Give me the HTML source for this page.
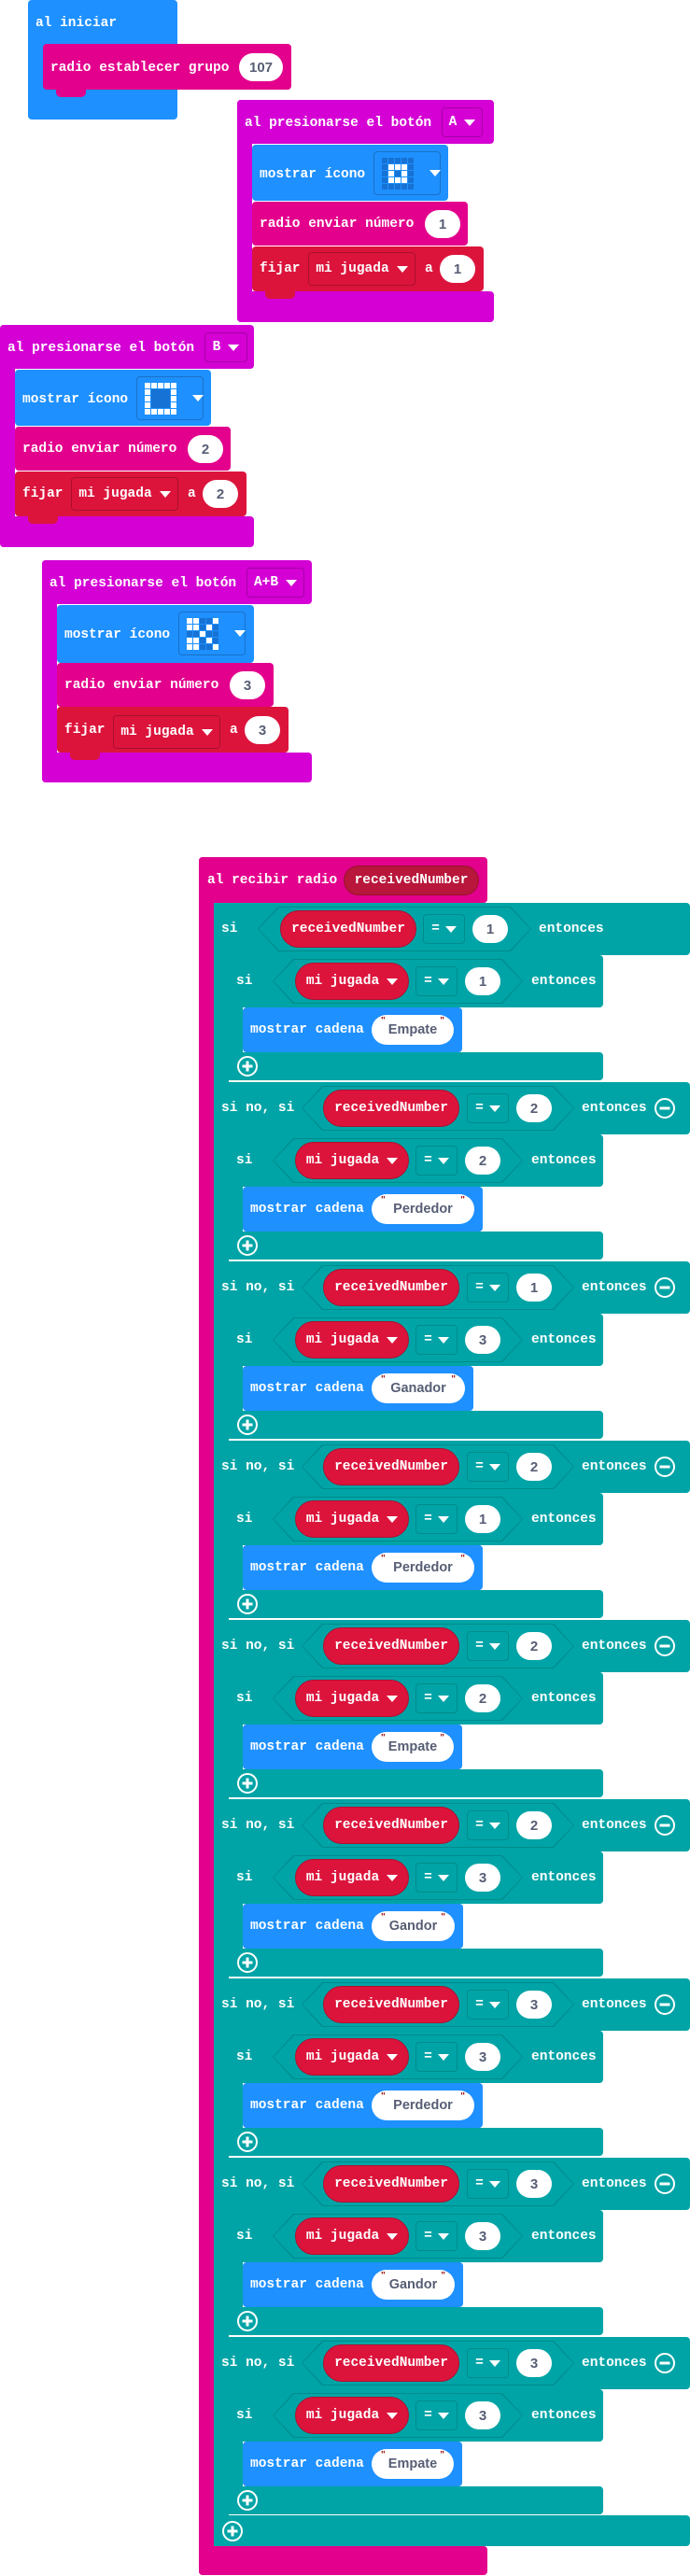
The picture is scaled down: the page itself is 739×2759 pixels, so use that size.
<!DOCTYPE html>
<html><head><meta charset="utf-8">
<style>
*{margin:0;padding:0;box-sizing:border-box}
body{width:739px;height:2759px;background:#fff;position:relative;overflow:hidden}
.a{position:absolute}
.r4{border-radius:4px}
.tx{position:absolute;font:bold 14.5px/20px "Liberation Mono",monospace;color:#fff;white-space:nowrap}
.ov{position:absolute;background:#fff;border-radius:16px;color:#575e75;font:bold 15px "Liberation Sans",sans-serif;display:flex;align-items:center;justify-content:center;height:30px;width:38px}
.dd{position:absolute;border:1px solid rgba(0,0,0,.22);border-radius:4px;display:flex;align-items:center;justify-content:center;font:bold 14.5px "Liberation Mono",monospace;color:#fff;white-space:nowrap}
.ar{display:inline-block;border-left:6px solid transparent;border-right:6px solid transparent;border-top:7px solid #fff;margin-left:8px;vertical-align:middle}
.seg{position:absolute;left:0;width:739px;height:192px}
.tl{position:absolute;background:#00a4a6}
.rowr{border-radius:0 4px 4px 0}
.hx{position:absolute;height:48px;background:#008b8d;clip-path:polygon(22px 0,calc(100% - 22px) 0,100% 50%,calc(100% - 22px) 100%,22px 100%,0 50%)}
.hx i{position:absolute;left:1px;top:1px;right:1px;bottom:1px;background:#00a4a6;clip-path:polygon(22px 0,calc(100% - 22px) 0,100% 50%,calc(100% - 22px) 100%,22px 100%,0 50%)}
.pl{position:absolute;height:40px;background:#dc143c;border:1px solid #b0102f;border-radius:20px;display:flex;align-items:center;justify-content:center;font:bold 14.5px "Liberation Mono",monospace;color:#fff;white-space:nowrap}
.eq{position:absolute;width:45px;height:32px;border:1px solid #008b8d;border-radius:4px;display:flex;align-items:center;justify-content:center;font:bold 14.5px "Liberation Mono",monospace;color:#fff}
.eq .ar{margin-left:6px}
.bl{position:absolute;background:#1e90ff;border-radius:4px}
.st{position:absolute;height:32px;background:#fff;border-radius:16px;color:#575e75;font:bold 14.5px "Liberation Sans",sans-serif;display:flex;align-items:center;justify-content:center}
.st::before{content:'"';position:absolute;left:10px;top:1px;font-size:10px;color:#a31515}
.st::after{content:'"';position:absolute;right:10px;top:1px;font-size:10px;color:#a31515}
.ic{position:absolute}
</style></head><body>

<!-- al iniciar -->
<div class="a r4" style="left:30px;top:0;width:160px;height:128px;background:#1e90ff"></div>
<div class="tx" style="left:38px;top:15px">al iniciar</div>
<div class="a r4" style="left:46px;top:47px;width:266px;height:49px;background:#e3008c"></div>
<div class="a" style="left:60px;top:94px;width:32px;height:10px;background:#e3008c;border-radius:0 0 5px 5px"></div>
<div class="tx" style="left:54px;top:63px">radio establecer grupo</div>
<div class="ov" style="left:256px;top:57px;width:47px">107</div>

<!-- Block A -->
<div class="a r4" style="left:254px;top:107px;width:275px;height:47px;background:#d400d4"></div>
<div class="a" style="left:254px;top:107px;width:16px;height:238px;background:#d400d4;border-radius:4px 0 0 4px"></div>
<div class="a r4" style="left:254px;top:312px;width:275px;height:33px;background:#d400d4"></div>
<div class="tx" style="left:262px;top:122px">al presionarse el botón</div>
<div class="dd" style="left:473px;top:115px;width:44px;height:32px">A<b class="ar"></b></div>
<div class="bl" style="left:270px;top:155px;width:210px;height:60px"></div>
<div class="tx" style="left:278px;top:177px">mostrar ícono</div>
<div class="dd" style="left:400px;top:162px;width:72px;height:47px;border-color:#1a72c8"></div>
<svg class="ic" style="left:409px;top:169px" width="34" height="34"><g fill="#1672d4"><rect x="0" y="0" width="6" height="6"/><rect x="7" y="0" width="6" height="6"/><rect x="14" y="0" width="6" height="6"/><rect x="21" y="0" width="6" height="6"/><rect x="28" y="0" width="6" height="6"/><rect x="0" y="7" width="6" height="6"/><rect x="28" y="7" width="6" height="6"/><rect x="0" y="14" width="6" height="6"/><rect x="14" y="14" width="6" height="6"/><rect x="28" y="14" width="6" height="6"/><rect x="0" y="21" width="6" height="6"/><rect x="28" y="21" width="6" height="6"/><rect x="0" y="28" width="6" height="6"/><rect x="7" y="28" width="6" height="6"/><rect x="14" y="28" width="6" height="6"/><rect x="21" y="28" width="6" height="6"/><rect x="28" y="28" width="6" height="6"/></g><g fill="#fff"><rect x="7" y="7" width="6" height="6"/><rect x="14" y="7" width="6" height="6"/><rect x="21" y="7" width="6" height="6"/><rect x="7" y="14" width="6" height="6"/><rect x="21" y="14" width="6" height="6"/><rect x="7" y="21" width="6" height="6"/><rect x="14" y="21" width="6" height="6"/><rect x="21" y="21" width="6" height="6"/></g></svg>
<b class="ar a" style="left:452px;top:182px"></b>
<div class="a r4" style="left:270px;top:216px;width:231px;height:47px;background:#e3008c"></div>
<div class="tx" style="left:278px;top:230px">radio enviar número</div>
<div class="ov" style="left:455px;top:225px">1</div>
<div class="a r4" style="left:270px;top:264px;width:248px;height:48px;background:#dc143c"></div>
<div class="a" style="left:284px;top:310px;width:32px;height:10px;background:#dc143c;border-radius:0 0 5px 5px"></div>
<div class="tx" style="left:278px;top:278px">fijar</div>
<div class="dd" style="left:330px;top:270px;width:115px;height:36px">mi jugada<b class="ar"></b></div>
<div class="tx" style="left:455px;top:278px">a</div>
<div class="ov" style="left:471px;top:273px">1</div>

<!-- Block B -->
<div class="a r4" style="left:0;top:348px;width:272px;height:47px;background:#d400d4"></div>
<div class="a" style="left:0;top:348px;width:16px;height:238px;background:#d400d4;border-radius:4px 0 0 4px"></div>
<div class="a r4" style="left:0;top:553px;width:272px;height:33px;background:#d400d4"></div>
<div class="tx" style="left:8px;top:363px">al presionarse el botón</div>
<div class="dd" style="left:219px;top:356px;width:46px;height:32px">B<b class="ar"></b></div>
<div class="bl" style="left:16px;top:396px;width:210px;height:60px"></div>
<div class="tx" style="left:24px;top:418px">mostrar ícono</div>
<div class="dd" style="left:146px;top:403px;width:72px;height:47px;border-color:#1a72c8"></div>
<svg class="ic" style="left:155px;top:410px" width="34" height="34"><g fill="#1672d4"><rect x="7" y="7" width="20" height="20"/></g><g fill="#fff"><rect x="0" y="0" width="6" height="6"/><rect x="7" y="0" width="6" height="6"/><rect x="14" y="0" width="6" height="6"/><rect x="21" y="0" width="6" height="6"/><rect x="28" y="0" width="6" height="6"/><rect x="0" y="7" width="6" height="6"/><rect x="28" y="7" width="6" height="6"/><rect x="0" y="14" width="6" height="6"/><rect x="28" y="14" width="6" height="6"/><rect x="0" y="21" width="6" height="6"/><rect x="28" y="21" width="6" height="6"/><rect x="0" y="28" width="6" height="6"/><rect x="7" y="28" width="6" height="6"/><rect x="14" y="28" width="6" height="6"/><rect x="21" y="28" width="6" height="6"/><rect x="28" y="28" width="6" height="6"/></g></svg>
<b class="ar a" style="left:198px;top:423px"></b>
<div class="a r4" style="left:16px;top:457px;width:231px;height:47px;background:#e3008c"></div>
<div class="tx" style="left:24px;top:471px">radio enviar número</div>
<div class="ov" style="left:201px;top:466px">2</div>
<div class="a r4" style="left:16px;top:505px;width:248px;height:48px;background:#dc143c"></div>
<div class="a" style="left:30px;top:551px;width:32px;height:10px;background:#dc143c;border-radius:0 0 5px 5px"></div>
<div class="tx" style="left:24px;top:519px">fijar</div>
<div class="dd" style="left:76px;top:511px;width:115px;height:36px">mi jugada<b class="ar"></b></div>
<div class="tx" style="left:201px;top:519px">a</div>
<div class="ov" style="left:217px;top:514px">2</div>

<!-- Block A+B -->
<div class="a r4" style="left:45px;top:600px;width:289px;height:47px;background:#d400d4"></div>
<div class="a" style="left:45px;top:600px;width:16px;height:238px;background:#d400d4;border-radius:4px 0 0 4px"></div>
<div class="a r4" style="left:45px;top:806px;width:289px;height:32px;background:#d400d4"></div>
<div class="tx" style="left:53px;top:615px">al presionarse el botón</div>
<div class="dd" style="left:264px;top:608px;width:62px;height:32px">A+B<b class="ar"></b></div>
<div class="bl" style="left:61px;top:648px;width:211px;height:62px"></div>
<div class="tx" style="left:69px;top:670px">mostrar ícono</div>
<div class="dd" style="left:191px;top:655px;width:72px;height:47px;border-color:#1a72c8"></div>
<svg class="ic" style="left:200px;top:662px" width="34" height="34"><g fill="#1672d4"><rect x="14" y="0" width="6" height="6"/><rect x="21" y="0" width="6" height="6"/><rect x="14" y="7" width="6" height="6"/><rect x="28" y="7" width="6" height="6"/><rect x="0" y="14" width="6" height="6"/><rect x="7" y="14" width="6" height="6"/><rect x="21" y="14" width="6" height="6"/><rect x="28" y="14" width="6" height="6"/><rect x="14" y="21" width="6" height="6"/><rect x="28" y="21" width="6" height="6"/><rect x="14" y="28" width="6" height="6"/><rect x="21" y="28" width="6" height="6"/></g><g fill="#fff"><rect x="0" y="0" width="6" height="6"/><rect x="7" y="0" width="6" height="6"/><rect x="28" y="0" width="6" height="6"/><rect x="0" y="7" width="6" height="6"/><rect x="7" y="7" width="6" height="6"/><rect x="21" y="7" width="6" height="6"/><rect x="14" y="14" width="6" height="6"/><rect x="0" y="21" width="6" height="6"/><rect x="7" y="21" width="6" height="6"/><rect x="21" y="21" width="6" height="6"/><rect x="0" y="28" width="6" height="6"/><rect x="7" y="28" width="6" height="6"/><rect x="28" y="28" width="6" height="6"/></g></svg>
<b class="ar a" style="left:243px;top:675px"></b>
<div class="a r4" style="left:61px;top:710px;width:232px;height:47px;background:#e3008c"></div>
<div class="tx" style="left:69px;top:724px">radio enviar número</div>
<div class="ov" style="left:246px;top:719px">3</div>
<div class="a r4" style="left:61px;top:757px;width:248px;height:49px;background:#dc143c"></div>
<div class="a" style="left:75px;top:804px;width:32px;height:10px;background:#dc143c;border-radius:0 0 5px 5px"></div>
<div class="tx" style="left:69px;top:772px">fijar</div>
<div class="dd" style="left:121px;top:766px;width:115px;height:36px">mi jugada<b class="ar"></b></div>
<div class="tx" style="left:246px;top:772px">a</div>
<div class="ov" style="left:262px;top:767px">3</div>

<!-- al recibir radio -->
<div class="a r4" style="left:213px;top:918px;width:309px;height:49px;background:#e3008c"></div>
<div class="a" style="left:213px;top:918px;width:20px;height:1840px;background:#e3008c;border-radius:4px 0 0 4px"></div>
<div class="a r4" style="left:213px;top:2727px;width:309px;height:31px;background:#e3008c"></div>
<div class="tx" style="left:222px;top:933px">al recibir radio</div>
<div class="pl" style="left:368px;top:927px;width:145px;height:32px;background:#b8163a;border-color:#9a1230">receivedNumber</div>
<div class="tl" style="left:229px;top:967px;width:16px;height:1760px;border-radius:4px 0 0 4px"></div>
<div class="tl rowr" style="left:229px;top:2694px;width:510px;height:33px"></div>
<svg class="a" style="left:237px;top:2699px" width="24" height="24"><circle cx="12" cy="12" r="10" fill="none" stroke="#fff" stroke-width="2"/><path d="M12 6.5v11M6.5 12h11" stroke="#fff" stroke-width="3"/></svg>

<!-- segment 0 -->
<div class="seg" style="top:967px">
<div class="tl rowr" style="left:229px;top:0;width:510px;height:56px"></div>
<div class="tx" style="left:237px;top:18px">si</div>
<div class="hx" style="left:276px;top:4px;width:293px"><i></i></div>
<div class="pl" style="left:300px;top:8px;width:146px">receivedNumber</div>
<div class="eq" style="left:453px;top:12px">=<b class="ar"></b></div>
<div class="ov" style="left:506px;top:13px">1</div>
<div class="tx" style="left:577px;top:18px">entonces</div>
<div class="tl r4" style="left:245px;top:56px;width:401px;height:56px"></div>
<div class="tl" style="left:245px;top:56px;width:15px;height:134px"></div>
<div class="tl r4" style="left:245px;top:160px;width:401px;height:30px"></div>
<div class="tx" style="left:253px;top:74px">si</div>
<div class="hx" style="left:292px;top:60px;width:268px"><i></i></div>
<div class="pl" style="left:316px;top:64px;width:122px">mi jugada<b class="ar"></b></div>
<div class="eq" style="left:445px;top:68px">=<b class="ar"></b></div>
<div class="ov" style="left:498px;top:69px">1</div>
<div class="tx" style="left:569px;top:74px">entonces</div>
<div class="bl" style="left:260px;top:112px;width:235px;height:48px"></div>
<div class="tx" style="left:268px;top:126px">mostrar cadena</div>
<div class="st" style="left:398px;top:120px;width:88px">Empate</div>
<svg class="a" style="left:253px;top:163px" width="24" height="24"><circle cx="12" cy="12" r="10" fill="none" stroke="#fff" stroke-width="2"/><path d="M12 6.5v11M6.5 12h11" stroke="#fff" stroke-width="3"/></svg>
</div>

<!-- segment 1 -->
<div class="seg" style="top:1159px">
<div class="tl rowr" style="left:229px;top:0;width:510px;height:56px"></div>
<div class="tx" style="left:237px;top:18px">si no, si</div>
<div class="hx" style="left:323px;top:4px;width:292px"><i></i></div>
<div class="pl" style="left:346px;top:8px;width:146px">receivedNumber</div>
<div class="eq" style="left:500px;top:12px">=<b class="ar"></b></div>
<div class="ov" style="left:553px;top:13px">2</div>
<div class="tx" style="left:623px;top:18px">entonces</div>
<svg class="a" style="left:700px;top:16px" width="24" height="24"><circle cx="12" cy="12" r="10" fill="none" stroke="#fff" stroke-width="2"/><path d="M6.5 12h11" stroke="#fff" stroke-width="3"/></svg>
<div class="tl r4" style="left:245px;top:56px;width:401px;height:56px"></div>
<div class="tl" style="left:245px;top:56px;width:15px;height:134px"></div>
<div class="tl r4" style="left:245px;top:160px;width:401px;height:30px"></div>
<div class="tx" style="left:253px;top:74px">si</div>
<div class="hx" style="left:292px;top:60px;width:268px"><i></i></div>
<div class="pl" style="left:316px;top:64px;width:122px">mi jugada<b class="ar"></b></div>
<div class="eq" style="left:445px;top:68px">=<b class="ar"></b></div>
<div class="ov" style="left:498px;top:69px">2</div>
<div class="tx" style="left:569px;top:74px">entonces</div>
<div class="bl" style="left:260px;top:112px;width:257px;height:48px"></div>
<div class="tx" style="left:268px;top:126px">mostrar cadena</div>
<div class="st" style="left:398px;top:120px;width:110px">Perdedor</div>
<svg class="a" style="left:253px;top:163px" width="24" height="24"><circle cx="12" cy="12" r="10" fill="none" stroke="#fff" stroke-width="2"/><path d="M12 6.5v11M6.5 12h11" stroke="#fff" stroke-width="3"/></svg>
</div>

<!-- segment 2 -->
<div class="seg" style="top:1351px">
<div class="tl rowr" style="left:229px;top:0;width:510px;height:56px"></div>
<div class="tx" style="left:237px;top:18px">si no, si</div>
<div class="hx" style="left:323px;top:4px;width:292px"><i></i></div>
<div class="pl" style="left:346px;top:8px;width:146px">receivedNumber</div>
<div class="eq" style="left:500px;top:12px">=<b class="ar"></b></div>
<div class="ov" style="left:553px;top:13px">1</div>
<div class="tx" style="left:623px;top:18px">entonces</div>
<svg class="a" style="left:700px;top:16px" width="24" height="24"><circle cx="12" cy="12" r="10" fill="none" stroke="#fff" stroke-width="2"/><path d="M6.5 12h11" stroke="#fff" stroke-width="3"/></svg>
<div class="tl r4" style="left:245px;top:56px;width:401px;height:56px"></div>
<div class="tl" style="left:245px;top:56px;width:15px;height:134px"></div>
<div class="tl r4" style="left:245px;top:160px;width:401px;height:30px"></div>
<div class="tx" style="left:253px;top:74px">si</div>
<div class="hx" style="left:292px;top:60px;width:268px"><i></i></div>
<div class="pl" style="left:316px;top:64px;width:122px">mi jugada<b class="ar"></b></div>
<div class="eq" style="left:445px;top:68px">=<b class="ar"></b></div>
<div class="ov" style="left:498px;top:69px">3</div>
<div class="tx" style="left:569px;top:74px">entonces</div>
<div class="bl" style="left:260px;top:112px;width:247px;height:48px"></div>
<div class="tx" style="left:268px;top:126px">mostrar cadena</div>
<div class="st" style="left:398px;top:120px;width:100px">Ganador</div>
<svg class="a" style="left:253px;top:163px" width="24" height="24"><circle cx="12" cy="12" r="10" fill="none" stroke="#fff" stroke-width="2"/><path d="M12 6.5v11M6.5 12h11" stroke="#fff" stroke-width="3"/></svg>
</div>

<!-- segment 3 -->
<div class="seg" style="top:1543px">
<div class="tl rowr" style="left:229px;top:0;width:510px;height:56px"></div>
<div class="tx" style="left:237px;top:18px">si no, si</div>
<div class="hx" style="left:323px;top:4px;width:292px"><i></i></div>
<div class="pl" style="left:346px;top:8px;width:146px">receivedNumber</div>
<div class="eq" style="left:500px;top:12px">=<b class="ar"></b></div>
<div class="ov" style="left:553px;top:13px">2</div>
<div class="tx" style="left:623px;top:18px">entonces</div>
<svg class="a" style="left:700px;top:16px" width="24" height="24"><circle cx="12" cy="12" r="10" fill="none" stroke="#fff" stroke-width="2"/><path d="M6.5 12h11" stroke="#fff" stroke-width="3"/></svg>
<div class="tl r4" style="left:245px;top:56px;width:401px;height:56px"></div>
<div class="tl" style="left:245px;top:56px;width:15px;height:134px"></div>
<div class="tl r4" style="left:245px;top:160px;width:401px;height:30px"></div>
<div class="tx" style="left:253px;top:74px">si</div>
<div class="hx" style="left:292px;top:60px;width:268px"><i></i></div>
<div class="pl" style="left:316px;top:64px;width:122px">mi jugada<b class="ar"></b></div>
<div class="eq" style="left:445px;top:68px">=<b class="ar"></b></div>
<div class="ov" style="left:498px;top:69px">1</div>
<div class="tx" style="left:569px;top:74px">entonces</div>
<div class="bl" style="left:260px;top:112px;width:257px;height:48px"></div>
<div class="tx" style="left:268px;top:126px">mostrar cadena</div>
<div class="st" style="left:398px;top:120px;width:110px">Perdedor</div>
<svg class="a" style="left:253px;top:163px" width="24" height="24"><circle cx="12" cy="12" r="10" fill="none" stroke="#fff" stroke-width="2"/><path d="M12 6.5v11M6.5 12h11" stroke="#fff" stroke-width="3"/></svg>
</div>

<!-- segment 4 -->
<div class="seg" style="top:1735px">
<div class="tl rowr" style="left:229px;top:0;width:510px;height:56px"></div>
<div class="tx" style="left:237px;top:18px">si no, si</div>
<div class="hx" style="left:323px;top:4px;width:292px"><i></i></div>
<div class="pl" style="left:346px;top:8px;width:146px">receivedNumber</div>
<div class="eq" style="left:500px;top:12px">=<b class="ar"></b></div>
<div class="ov" style="left:553px;top:13px">2</div>
<div class="tx" style="left:623px;top:18px">entonces</div>
<svg class="a" style="left:700px;top:16px" width="24" height="24"><circle cx="12" cy="12" r="10" fill="none" stroke="#fff" stroke-width="2"/><path d="M6.5 12h11" stroke="#fff" stroke-width="3"/></svg>
<div class="tl r4" style="left:245px;top:56px;width:401px;height:56px"></div>
<div class="tl" style="left:245px;top:56px;width:15px;height:134px"></div>
<div class="tl r4" style="left:245px;top:160px;width:401px;height:30px"></div>
<div class="tx" style="left:253px;top:74px">si</div>
<div class="hx" style="left:292px;top:60px;width:268px"><i></i></div>
<div class="pl" style="left:316px;top:64px;width:122px">mi jugada<b class="ar"></b></div>
<div class="eq" style="left:445px;top:68px">=<b class="ar"></b></div>
<div class="ov" style="left:498px;top:69px">2</div>
<div class="tx" style="left:569px;top:74px">entonces</div>
<div class="bl" style="left:260px;top:112px;width:235px;height:48px"></div>
<div class="tx" style="left:268px;top:126px">mostrar cadena</div>
<div class="st" style="left:398px;top:120px;width:88px">Empate</div>
<svg class="a" style="left:253px;top:163px" width="24" height="24"><circle cx="12" cy="12" r="10" fill="none" stroke="#fff" stroke-width="2"/><path d="M12 6.5v11M6.5 12h11" stroke="#fff" stroke-width="3"/></svg>
</div>

<!-- segment 5 -->
<div class="seg" style="top:1927px">
<div class="tl rowr" style="left:229px;top:0;width:510px;height:56px"></div>
<div class="tx" style="left:237px;top:18px">si no, si</div>
<div class="hx" style="left:323px;top:4px;width:292px"><i></i></div>
<div class="pl" style="left:346px;top:8px;width:146px">receivedNumber</div>
<div class="eq" style="left:500px;top:12px">=<b class="ar"></b></div>
<div class="ov" style="left:553px;top:13px">2</div>
<div class="tx" style="left:623px;top:18px">entonces</div>
<svg class="a" style="left:700px;top:16px" width="24" height="24"><circle cx="12" cy="12" r="10" fill="none" stroke="#fff" stroke-width="2"/><path d="M6.5 12h11" stroke="#fff" stroke-width="3"/></svg>
<div class="tl r4" style="left:245px;top:56px;width:401px;height:56px"></div>
<div class="tl" style="left:245px;top:56px;width:15px;height:134px"></div>
<div class="tl r4" style="left:245px;top:160px;width:401px;height:30px"></div>
<div class="tx" style="left:253px;top:74px">si</div>
<div class="hx" style="left:292px;top:60px;width:268px"><i></i></div>
<div class="pl" style="left:316px;top:64px;width:122px">mi jugada<b class="ar"></b></div>
<div class="eq" style="left:445px;top:68px">=<b class="ar"></b></div>
<div class="ov" style="left:498px;top:69px">3</div>
<div class="tx" style="left:569px;top:74px">entonces</div>
<div class="bl" style="left:260px;top:112px;width:236px;height:48px"></div>
<div class="tx" style="left:268px;top:126px">mostrar cadena</div>
<div class="st" style="left:398px;top:120px;width:89px">Gandor</div>
<svg class="a" style="left:253px;top:163px" width="24" height="24"><circle cx="12" cy="12" r="10" fill="none" stroke="#fff" stroke-width="2"/><path d="M12 6.5v11M6.5 12h11" stroke="#fff" stroke-width="3"/></svg>
</div>

<!-- segment 6 -->
<div class="seg" style="top:2119px">
<div class="tl rowr" style="left:229px;top:0;width:510px;height:56px"></div>
<div class="tx" style="left:237px;top:18px">si no, si</div>
<div class="hx" style="left:323px;top:4px;width:292px"><i></i></div>
<div class="pl" style="left:346px;top:8px;width:146px">receivedNumber</div>
<div class="eq" style="left:500px;top:12px">=<b class="ar"></b></div>
<div class="ov" style="left:553px;top:13px">3</div>
<div class="tx" style="left:623px;top:18px">entonces</div>
<svg class="a" style="left:700px;top:16px" width="24" height="24"><circle cx="12" cy="12" r="10" fill="none" stroke="#fff" stroke-width="2"/><path d="M6.5 12h11" stroke="#fff" stroke-width="3"/></svg>
<div class="tl r4" style="left:245px;top:56px;width:401px;height:56px"></div>
<div class="tl" style="left:245px;top:56px;width:15px;height:134px"></div>
<div class="tl r4" style="left:245px;top:160px;width:401px;height:30px"></div>
<div class="tx" style="left:253px;top:74px">si</div>
<div class="hx" style="left:292px;top:60px;width:268px"><i></i></div>
<div class="pl" style="left:316px;top:64px;width:122px">mi jugada<b class="ar"></b></div>
<div class="eq" style="left:445px;top:68px">=<b class="ar"></b></div>
<div class="ov" style="left:498px;top:69px">3</div>
<div class="tx" style="left:569px;top:74px">entonces</div>
<div class="bl" style="left:260px;top:112px;width:257px;height:48px"></div>
<div class="tx" style="left:268px;top:126px">mostrar cadena</div>
<div class="st" style="left:398px;top:120px;width:110px">Perdedor</div>
<svg class="a" style="left:253px;top:163px" width="24" height="24"><circle cx="12" cy="12" r="10" fill="none" stroke="#fff" stroke-width="2"/><path d="M12 6.5v11M6.5 12h11" stroke="#fff" stroke-width="3"/></svg>
</div>

<!-- segment 7 -->
<div class="seg" style="top:2311px">
<div class="tl rowr" style="left:229px;top:0;width:510px;height:56px"></div>
<div class="tx" style="left:237px;top:18px">si no, si</div>
<div class="hx" style="left:323px;top:4px;width:292px"><i></i></div>
<div class="pl" style="left:346px;top:8px;width:146px">receivedNumber</div>
<div class="eq" style="left:500px;top:12px">=<b class="ar"></b></div>
<div class="ov" style="left:553px;top:13px">3</div>
<div class="tx" style="left:623px;top:18px">entonces</div>
<svg class="a" style="left:700px;top:16px" width="24" height="24"><circle cx="12" cy="12" r="10" fill="none" stroke="#fff" stroke-width="2"/><path d="M6.5 12h11" stroke="#fff" stroke-width="3"/></svg>
<div class="tl r4" style="left:245px;top:56px;width:401px;height:56px"></div>
<div class="tl" style="left:245px;top:56px;width:15px;height:134px"></div>
<div class="tl r4" style="left:245px;top:160px;width:401px;height:30px"></div>
<div class="tx" style="left:253px;top:74px">si</div>
<div class="hx" style="left:292px;top:60px;width:268px"><i></i></div>
<div class="pl" style="left:316px;top:64px;width:122px">mi jugada<b class="ar"></b></div>
<div class="eq" style="left:445px;top:68px">=<b class="ar"></b></div>
<div class="ov" style="left:498px;top:69px">3</div>
<div class="tx" style="left:569px;top:74px">entonces</div>
<div class="bl" style="left:260px;top:112px;width:236px;height:48px"></div>
<div class="tx" style="left:268px;top:126px">mostrar cadena</div>
<div class="st" style="left:398px;top:120px;width:89px">Gandor</div>
<svg class="a" style="left:253px;top:163px" width="24" height="24"><circle cx="12" cy="12" r="10" fill="none" stroke="#fff" stroke-width="2"/><path d="M12 6.5v11M6.5 12h11" stroke="#fff" stroke-width="3"/></svg>
</div>

<!-- segment 8 -->
<div class="seg" style="top:2503px">
<div class="tl rowr" style="left:229px;top:0;width:510px;height:56px"></div>
<div class="tx" style="left:237px;top:18px">si no, si</div>
<div class="hx" style="left:323px;top:4px;width:292px"><i></i></div>
<div class="pl" style="left:346px;top:8px;width:146px">receivedNumber</div>
<div class="eq" style="left:500px;top:12px">=<b class="ar"></b></div>
<div class="ov" style="left:553px;top:13px">3</div>
<div class="tx" style="left:623px;top:18px">entonces</div>
<svg class="a" style="left:700px;top:16px" width="24" height="24"><circle cx="12" cy="12" r="10" fill="none" stroke="#fff" stroke-width="2"/><path d="M6.5 12h11" stroke="#fff" stroke-width="3"/></svg>
<div class="tl r4" style="left:245px;top:56px;width:401px;height:56px"></div>
<div class="tl" style="left:245px;top:56px;width:15px;height:134px"></div>
<div class="tl r4" style="left:245px;top:160px;width:401px;height:30px"></div>
<div class="tx" style="left:253px;top:74px">si</div>
<div class="hx" style="left:292px;top:60px;width:268px"><i></i></div>
<div class="pl" style="left:316px;top:64px;width:122px">mi jugada<b class="ar"></b></div>
<div class="eq" style="left:445px;top:68px">=<b class="ar"></b></div>
<div class="ov" style="left:498px;top:69px">3</div>
<div class="tx" style="left:569px;top:74px">entonces</div>
<div class="bl" style="left:260px;top:112px;width:235px;height:48px"></div>
<div class="tx" style="left:268px;top:126px">mostrar cadena</div>
<div class="st" style="left:398px;top:120px;width:88px">Empate</div>
<svg class="a" style="left:253px;top:163px" width="24" height="24"><circle cx="12" cy="12" r="10" fill="none" stroke="#fff" stroke-width="2"/><path d="M12 6.5v11M6.5 12h11" stroke="#fff" stroke-width="3"/></svg>
</div>

</body></html>
